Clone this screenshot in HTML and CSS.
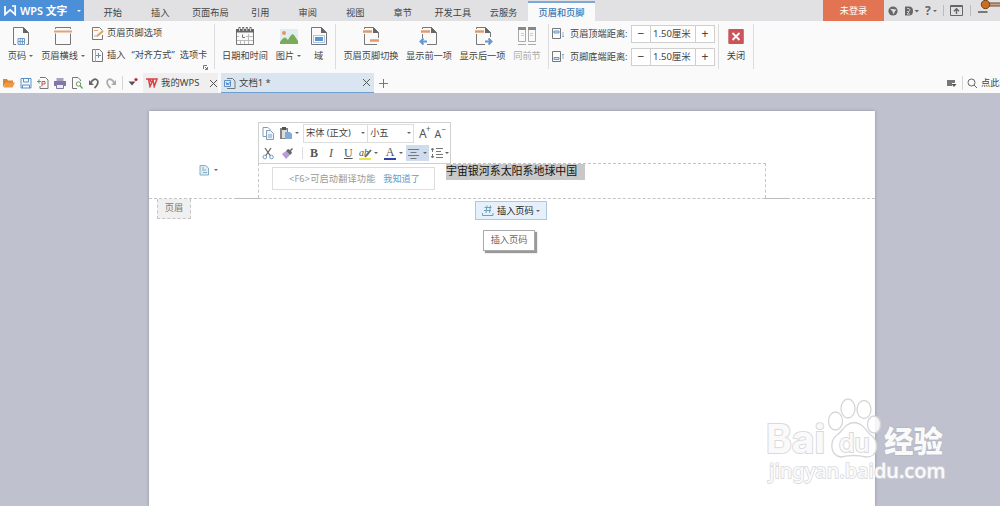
FILE: index.html
```html
<!DOCTYPE html>
<html>
<head>
<meta charset="utf-8">
<title>WPS 文字</title>
<link rel="stylesheet" href="styles.css">
</head>
<body>
<header class="titlebar">
  <div class="brand">
    <svg width="13" height="11" viewBox="0 0 13 11" fill="none" stroke="#fff" stroke-width="1.7"><path d="M1 1v8.500L6.200 4.800l5 4.700V1H8"/></svg>
    <span class="brand-name">WPS 文字</span><i class="caret light"></i>
  </div>
  <nav class="tabs">
    <span>开始</span><span>插入</span><span>页面布局</span><span>引用</span><span>审阅</span><span>视图</span><span>章节</span><span>开发工具</span><span>云服务</span><span class="active">页眉和页脚</span>
  </nav>
  <div class="login">未登录</div>
  <div class="system">
    <svg width="10" height="10" viewBox="0 0 10 10"><circle cx="5" cy="5" r="4.600" fill="#666"/><path d="M2 2.800l6.200.6-3 5-.6-3z" fill="#e1e1e3"/></svg>
    <svg class="skin" width="14" height="10" viewBox="0 0 14 10"><path d="M0 .5h4q4 0 4 4.500t-4 4.500H0z" fill="#666"/><path d="M2 2.500h2l1 1.500-1 1.500H2M4 6l-2 2h3" stroke="#e1e1e3" stroke-width=".8" fill="none"/><path d="M9.500 4H14l-2.200 2.500z" fill="#666"/></svg>
    <span class="help">?</span><i class="caret"></i>
    <i class="bar"></i>
    <svg class="collapse" width="13" height="11" viewBox="0 0 13 11" fill="none" stroke="#666"><path d="M.5.5h12v10H.5zM.5 1.500h12" /><path d="M6.500 9V4M4 6.300l2.500-2.500 2.500 2.500" stroke-width="1.400"/></svg>
    <i class="bar second"></i>
    <svg class="knob" width="22" height="21" viewBox="0 0 22 21"><path d="M0 12h9.500" stroke="#555" stroke-width="1.500"/><path d="M8 4.500h14" stroke="#674b35" stroke-width="4"/><path d="M8 4.500h14" stroke="#d2a47a" stroke-width="2"/><circle cx="7.500" cy="4.500" r="4.200" fill="#c8701d" stroke="#754018"/></svg>
  </div>
</header>

<section class="ribbon">
  <div class="tool number">
    <svg width="20" height="20" viewBox="0 0 20 20" fill="none" stroke="#777"><path d="M5 18.500H2.500v-17h10l5 5v12h-2"/><path d="M12 1l6 6h-6z" fill="#666" stroke="none"/><path d="M7 12.500h6.500v6H7zM7 15.500h6.500M9.200 12.500v6M11.400 12.500v6" stroke="#6b9bcc"/></svg>
    <span>页码<i class="caret"></i></span>
  </div>
  <div class="tool rule">
    <svg width="20" height="20" viewBox="0 0 20 20" fill="none"><path d="M2.500 3V1.500h15V3M2.500 7.500v11h15v-11" stroke="#777"/><path d="M1 5.500h18" stroke="#e4a374" stroke-width="2"/></svg>
    <span>页眉横线<i class="caret"></i></span>
  </div>
  <div class="stack options">
    <div><svg width="12" height="13" viewBox="0 0 12 13" fill="none"><path d="M10.500 8v4.500H.5V.5h7l3 3" stroke="#777"/><path d="M2 3.500h4M2 9h4" stroke="#e4a374"/><path d="M5 9l6-5" stroke="#dda15f" stroke-width="2"/></svg>页眉页脚选项</div>
    <div><svg width="12" height="13" viewBox="0 0 12 13" fill="none"><path d="M3.500.5h-3v12h3M3.500.5h4l3 3v9h-7" stroke="#777"/><path d="M3.500 1v11" stroke="#aaa"/><path d="M4 6.500h5M6.500 4v5" stroke="#668fbd"/></svg>插入<span class="quote">“对齐方式”</span>选项卡</div>
    <svg class="launcher" width="5" height="5" viewBox="0 0 5 5" fill="none" stroke="#777"><path d="M.5 4V.5H4M2 2l2 2M4.500 2v2.500H2"/></svg>
  </div>
  <i class="divider"></i>
  <div class="tool date">
    <svg width="20" height="20" viewBox="0 0 20 20" fill="none"><path d="M5.500 8v10M9.500 8v10M13.500 8v10M2 10.500h16M2 14.500h16" stroke="#bbb"/><path d="M4 8h7v6H4z" fill="#fafafa"/><path d="M1.500 3.500h17v15h-17z" stroke="#777"/><path d="M1 3h18v3.500H1z" fill="#666"/><path d="M4.500 1v4M8.200 1v4M11.800 1v4M15.500 1v4" stroke="#666" stroke-width="2"/><path d="M4.500 2v3M8.200 2v3M11.800 2v3M15.500 2v3" stroke="#eee" stroke-width=".8"/><path d="M7.500 8.500v3H10" stroke="#777"/></svg>
    <span>日期和时间</span>
  </div>
  <div class="tool picture">
    <svg width="20" height="20" viewBox="0 0 20 20"><path d="M1 3h18v15H1z" fill="#e1edf1"/><circle cx="5" cy="7" r="2" fill="#e79663"/><path d="M1 18v-2q4-6 6-4l2 2q4-8 6-5l4 6v3z" fill="#78ac59"/></svg>
    <span>图片<i class="caret"></i></span>
  </div>
  <div class="tool field">
    <svg width="20" height="20" viewBox="0 0 20 20" fill="none"><path d="M2.500 1.500h10l5 5v12h-15z" stroke="#777"/><path d="M12 1l6 6h-6z" fill="#666"/><path d="M6 11h8v4H6z" fill="#5d93d1"/><path d="M4.500 9.500h11v7h-11z" stroke="#5d93d1" stroke-dasharray="1 1"/></svg>
    <span>域</span>
  </div>
  <i class="divider d2"></i>
  <div class="tool switch">
    <svg width="20" height="20" viewBox="0 0 20 20" fill="none"><path d="M3.500 8v10.500H16M3.500 3V1.500h9l5 5V12" stroke="#777"/><path d="M12 1l6 6h-6z" fill="#666"/><path d="M2 5.500h9M9 14.500h9" stroke="#e49b6b" stroke-width="2.500"/></svg>
    <span>页眉页脚切换</span>
  </div>
  <div class="tool prev">
    <svg width="20" height="20" viewBox="0 0 20 20" fill="none"><path d="M3.500 8v4M3.500 3V1.500h9l5 5v12H8" stroke="#777"/><path d="M12 1l6 6h-6z" fill="#666"/><path d="M2 5.500h9" stroke="#e49b6b" stroke-width="2.500"/><path d="M8 15.500H2M4.500 12.500l-3 3 3 3" stroke="#6596d0" stroke-width="2"/></svg>
    <span>显示前一项</span>
  </div>
  <div class="tool next">
    <svg width="20" height="20" viewBox="0 0 20 20" fill="none"><path d="M3.500 8v10.500H12M3.500 3V1.500h9l5 5V11" stroke="#777"/><path d="M12 1l6 6h-6z" fill="#666"/><path d="M2 5.500h9" stroke="#e49b6b" stroke-width="2.500"/><path d="M12 15.500h6M15.500 12.500l3 3-3 3" stroke="#6596d0" stroke-width="2"/></svg>
    <span>显示后一项</span>
  </div>
  <div class="tool same">
    <svg width="20" height="20" viewBox="0 0 20 20" fill="none" stroke="#aaa"><path d="M1.500 1.500h7v14h-7zM11.500 1.500h7v14h-7z"/><path d="M1 2.500h8M11 2.500h8" stroke="#888" stroke-width="3"/><path d="M1 18.500h8M11 18.500h8"/><path d="M4 7.500h3M4 9.500h3M13 7.500h3M13 9.500h3" stroke="#ccc"/></svg>
    <span>同前节</span>
  </div>
  <i class="divider"></i>
  <div class="stack distance">
    <div><svg width="12" height="12" viewBox="0 0 12 12" fill="none"><path d="M.5.5h8v10h-8z" stroke="#777"/><path d="M2 3h5v2H2z" fill="#cfe0f1" stroke="#6799c9"/><path d="M11 4v5M10 8l1 1 1-1" stroke="#6799c9" stroke-width=".7"/></svg><label>页眉顶端距离:</label><span class="spin"><b>−</b><em>1.50厘米</em><b>+</b></span></div>
    <div><svg width="12" height="12" viewBox="0 0 12 12" fill="none"><path d="M.5.5h8v10h-8z" stroke="#777"/><path d="M2 6.500h5v2H2z" fill="#cfe0f1" stroke="#6799c9"/><path d="M11 3v5M10 4l1-1 1 1" stroke="#6799c9" stroke-width=".7"/></svg><label>页脚底端距离:</label><span class="spin"><b>−</b><em>1.50厘米</em><b>+</b></span></div>
  </div>
  <i class="divider d3"></i>
  <div class="tool close">
    <svg width="20" height="20" viewBox="0 0 20 20"><rect x="2.300" y="3" width="15.500" height="15" rx="1" fill="#cc5357"/><path d="M6.500 7l7 7m0-7l-7 7" stroke="#fff" stroke-width="1.800"/></svg>
    <span>关闭</span>
  </div>
  <i class="divider"></i>
</section>

<section class="quickbar">
  <div class="quick">
    <svg width="12" height="12" viewBox="0 0 12 12"><path d="M0 10V2h4l1 1.500h5V6H3z" fill="#d98534"/><path d="M3 5.500h9L9.500 10.500H.5z" fill="#ec9a45"/></svg>
    <svg width="12" height="12" viewBox="0 0 12 12" fill="none" stroke="#5c8fc5"><path d="M1 1.500h10v9.500H1zM3.500 1.500v3.500h5V1.500M2.500 11V8h7v3"/></svg>
    <svg width="12" height="12" viewBox="0 0 12 12" fill="none"><path d="M3 .5h5.500L11 3v8.500H3V9" stroke="#777"/><path d="M0 4.500h4M2 2.500v4" stroke="#5b9a59"/><path d="M5 9.500V4.500h3v2.500H5" stroke="#c65555"/></svg>
    <svg width="12" height="12" viewBox="0 0 12 12"><path d="M2.500 1h7v3h-7z" fill="#aaa0c2"/><path d="M0 4h12v5H0z" fill="#8178a9"/><path d="M2.500 7.500h7v4h-7z" fill="#eee" stroke="#8178a9"/></svg>
    <svg width="12" height="12" viewBox="0 0 12 12" fill="none"><path d="M9.500 4V3L7 .5H1.500v11H6" stroke="#777"/><circle cx="7.500" cy="7" r="2.200" stroke="#66a066"/><path d="M9 8.500l2.500 3" stroke="#66a066" stroke-width="1.300"/></svg>
    <svg width="12" height="12" viewBox="0 0 12 12" fill="none" stroke="#666" stroke-width="1.700"><path d="M2.500 6q4-6 7-2.500Q11 7 6.500 11"/><path d="M1 3v5h5z" fill="#666" stroke="none"/></svg>
    <svg width="12" height="12" viewBox="0 0 12 12" fill="none" stroke="#aaa" stroke-width="1.700"><path d="M9.500 6q-4-6-7-2.500Q1 7 5.500 11"/><path d="M11 3v5H6z" fill="#aaa" stroke="none"/></svg>
  </div>
  <i class="qdiv"></i>
  <svg class="more" width="12" height="12" viewBox="0 0 12 12"><path d="M1.500 4.500h7l-3.500 4z" fill="#555"/><circle cx="9" cy="2.500" r="1.600" fill="#c5222b"/></svg>
  <div class="file home"><svg width="12" height="10" viewBox="0 0 12 10" fill="none" stroke="#d84449" stroke-width="1.500"><path d="M0 1h2.500L4 8.500 7 2l1.200 6.500L11 1H4l1 3"/></svg><span>我的WPS</span><i class="x"></i></div>
  <div class="file doc"><svg width="12" height="12" viewBox="0 0 12 12" fill="none"><path d="M3 1.500h5.500L11 4v7.500H3" stroke="#777"/><path d="M.5 3.500h6v6h-6z" fill="#dbe9f8" stroke="#5d91c7"/><path d="M2 5l1 3 .7-2 .8 2 1-3" stroke="#4780b8" stroke-width=".8"/></svg><span>文档1 *</span><i class="x"></i></div>
  <i class="plus"></i>
  <div class="find">
    <svg width="10" height="9" viewBox="0 0 10 9"><path d="M0 1h8v3H5v3H0z" fill="#777"/><path d="M4.500 5h5L7 8z" fill="#555"/></svg>
    <i class="qdiv"></i>
    <svg width="11" height="11" viewBox="0 0 11 11" fill="none" stroke="#666"><circle cx="4.500" cy="4.500" r="3.500"/><path d="M7 7l3 3"/></svg>
    <span>点此查</span>
  </div>
</section>

<main class="workspace">
  <article class="page">
    <div class="header-zone">
      <div class="header-frame"><span class="selected">宇宙银河系太阳系地球中国</span></div>
    </div>
    <div class="header-tag">页眉</div>
    <div class="tick left"></div><div class="tick right"></div>
    <div class="paste-mark"><svg width="11" height="12" viewBox="0 0 11 12" fill="none" stroke="#84adc6"><path d="M1 1.500h5.500L9.500 4v7H1z" fill="#e1edf4"/><path d="M3 4h2M3 6h4M4 8.500h4"/></svg><i class="caret"></i></div>
    <div class="hint"><span>&lt;F6&gt;可启动翻译功能</span><a>我知道了</a></div>
    <div class="mini">
      <div class="mini-row">
        <svg width="13" height="13" viewBox="0 0 13 13" fill="none" stroke="#829db9"><path d="M1 .5h5l2 2v7H1z"/><path d="M4.500 3.500h4l3 3v6h-7z" fill="#edf3fa"/><path d="M6 8h4M6 10h4"/></svg>
        <svg class="paste" width="13" height="13" viewBox="0 0 13 13"><path d="M0 1h8v11H0z" fill="#848487"/><path d="M2 0h4v3H2z" fill="#555"/><path d="M2 3h5v8H2z" fill="#ddd"/><path d="M5 5h5l2 2v5H5z" fill="#84aad9"/></svg><i class="caret"></i>
        <div class="select font"><span>宋体 (正文)</span><i class="caret"></i></div><div class="select size"><span>小五</span><i class="caret"></i></div>
        <span class="grow">A<sup>+</sup></span><span class="grow shrink">A<sup>−</sup></span>
      </div>
      <div class="mini-row">
        <svg width="13" height="13" viewBox="0 0 13 13" fill="none"><path d="M3 1l5.500 8M9 1L3.500 9" stroke="#666" stroke-width="1.300"/><circle cx="2.800" cy="10" r="1.800" stroke="#769bc6"/><circle cx="9.500" cy="10" r="1.800" stroke="#769bc6"/></svg>
        <svg class="brush" width="13" height="13" viewBox="0 0 13 13"><path d="M1 7l4-3 4 4-4 4z" fill="#ba9bd8"/><path d="M5 4l2-2 2 1 2-2 1 1-2 2 1 2-2 2z" fill="#666"/></svg>
        <i class="mini-div"></i>
        <span class="glyph bold">B</span><span class="glyph italic">I</span><span class="glyph under">U</span>
        <span class="glyph mark">ab<svg width="8" height="9" viewBox="0 0 8 9"><path d="M1 8l6-7" stroke="#666" stroke-width="1.800"/></svg></span><i class="caret"></i>
        <span class="glyph color">A</span><i class="caret"></i>
        <span class="align"><svg width="12" height="12" viewBox="0 0 12 12" stroke="#777"><path d="M0 2.500h11M2.500 5.500h6M0 8.500h11M2.500 11.500h6"/></svg><i class="caret"></i></span>
        <svg class="spacing" width="12" height="12" viewBox="0 0 12 12" fill="none" stroke="#777"><path d="M5 1.500h7M5 4.500h5M5 7.500h7M5 10.500h7M1.500 1v4M0 3l1.500-2L3 3M1.500 7v4M0 9l1.500 2L3 9"/></svg><i class="caret"></i>
      </div>
    </div>
    <div class="insert"><svg width="12" height="12" viewBox="0 0 12 12" fill="none" stroke="#6da0bf"><path d="M2.500 2.500h7M2 5.500h7M5 .5L4 8M8.500.5L7.500 8M.5 8v2.500h10.500V8"/></svg><span>插入页码</span><i class="caret"></i></div>
    <div class="tooltip">插入页码</div>
  </article>
  <div class="watermark">
    <span class="bai">Bai</span>
    <svg width="54" height="62" viewBox="0 0 54 62" fill="#fff" fill-opacity=".85" stroke="#d6d6d9" stroke-width="1.300"><ellipse cx="7.500" cy="24" rx="7" ry="9"/><ellipse cx="20" cy="11.500" rx="7" ry="9.500"/><ellipse cx="36" cy="12.500" rx="7" ry="9"/><ellipse cx="46" cy="27.500" rx="6.500" ry="8.500"/><path d="M26 25.500C17 26 15 34 9 38C2 43 1 58 13 60Q26 57 38 60C51 60 51 45 44 39C37 34 36 26 26 25.500z"/></svg>
    <span class="du">du</span>
    <span class="jy">经验</span>
    <span class="url">jingyan.baidu.com</span>
  </div>
</main>
</body>
</html>
```
FILE: styles.css
```css
* { box-sizing: border-box; }
body {
  margin: 0; width: 1000px; height: 506px; overflow: hidden;
  display: flex; flex-direction: column;
  font: 9.2px/14px "Noto Sans", "Noto Sans CJK SC", sans-serif;
  color: #444; background: #fafafa; white-space: nowrap;
}
i, em { font-style: normal; }
svg { display: block; flex: none; }
.caret { flex: none; display: inline-block; border: 2.5px solid transparent; border-top-color: #666; border-bottom: 0; }
.caret.light { border-top-color: #fff; }

/* Title bar */
.titlebar { height: 21px; flex: none; display: flex; background: #e1e1e3; }
.brand { width: 84px; height: 21px; display: flex; align-items: center; padding-left: 4px; background: #4b8fd9; color: #fff; }
.brand-name { width: 56px; padding-left: 3px; font-size: 10.8px; font-weight: 600; }
.brand .caret { margin-left: 4px; }
.tabs { display: flex; width: 739px; padding-left: 5px; }
.tabs span { width: 47.5px; text-align: center; padding-top: 6px; height: 21px; }
.tabs span:nth-child(3), .tabs span:nth-child(8) { width: 52.5px; }
.tabs span:nth-child(9) { width: 49px; }
.tabs .active { width: 67px; padding-top: 3px; margin-top: 1px; height: 20px; border-top: 2px solid #7ba8d6; background: #fafafa; color: #3b78b4; font-weight: 500; }
.login { width: 61px; padding-top: 4px; background: #e27454; color: #fff; text-align: center; }
.system { display: flex; align-items: center; height: 21px; padding-left: 4px; width: 116px; }
.skin { margin-left: 7px; }
.help { font-size: 12px; font-weight: 700; color: #666; width: 8px; margin: 0 2px 0 6px; }
.bar { width: 1px; height: 11px; background: #bbb; margin: 0 6px 0 6px; }
.bar.second { margin: 0 7px; }

/* Ribbon */
.ribbon { height: 52px; flex: none; display: flex; padding-left: 4px; }
.tool { display: flex; flex-direction: column; align-items: center; padding-top: 5px; }
.tool span { margin-top: 3px; display: flex; align-items: center; gap: 3px; }
.number { width: 33px; } .rule { width: 52px; }
.date { width: 52px; margin-left: 4px; } .picture { width: 35px; } .field { width: 25px; }
.switch { width: 60px; } .prev { width: 56px; } .next { width: 51px; } .same { width: 38px; color: #aaa; }
.close { width: 34px; }
.divider { width: 1px; height: 45px; margin-top: 3px; background: #dcdcde; flex: none; }
.d2 { margin: 3px 5px 0 4px; }
.same + .divider { margin-left: 2px; }
.stack { display: flex; flex-direction: column; }
.stack div { display: flex; align-items: center; height: 22px; }
.options { width: 125px; padding: 1px 0 0 3px; }
.options svg { margin-right: 3px; }
.options .quote { margin: 0 5px 0 6px; }
.options .launcher { align-self: flex-end; margin: -1px 6px 0 0; }
.distance { width: 166px; padding: 1px 0 0 3px; }
.distance div { height: 23px; }
.distance label { width: 61px; margin-left: 6px; }
.spin { display: flex; width: 84px; height: 18px; border: 1px solid #cfcfcf; background: #fff; line-height: 16px; }
.spin b { width: 18px; text-align: center; font-size: 12px; font-weight: 400; color: #444; }
.spin em { flex: 1; font-size: 9.5px; padding-left: 2px; border: solid #cfcfcf; border-width: 0 1px; }
.d3 { margin-left: 3px; }

/* Quick access and file tabs */
.quickbar { height: 20px; flex: none; display: flex; align-items: center; }
.quick { display: flex; gap: 5px; padding-left: 3px; width: 122px; }
.qdiv { width: 1px; height: 14px; background: #d5d5d7; }
.more { margin: 0 4px 0 4px; }
.file { display: flex; align-items: center; height: 20px; background: #efeff0; padding: 0 4px 0 3px; gap: 3px; }
.home { width: 75px; margin-right: 3px; padding-right: 1px; font-size: 9.4px; }
.doc { width: 153px; background: #dae5f2; border-bottom: 1.5px solid #6f9fd0; font-size: 9.4px; }
.x { margin-left: auto; width: 7px; height: 7px; background: linear-gradient(45deg, transparent 43%, #555 45% 55%, transparent 57%), linear-gradient(-45deg, transparent 43%, #555 45% 55%, transparent 57%); }
.plus { width: 9px; height: 9px; margin-left: 5px; background: linear-gradient(#777, #777) 4px 0/1px 9px no-repeat, linear-gradient(#777, #777) 0 4px/9px 1px no-repeat; }
.find { display: flex; align-items: center; margin-left: auto; width: 53px; overflow: hidden; flex: none; }
.find .qdiv { flex: none; margin: 0 4px 0 5px; }
.find span { margin-left: 3px; }

/* Document */
.workspace { position: relative; flex: 1; background: #bfc2ce; padding: 18px 0 0 149px; }
.page { position: relative; width: 726px; height: 395px; background: #fff; box-shadow: 0 0 3px #8e919d; }
.header-zone { height: 88px; padding: 52px 109px 0 109px; border-bottom: 1px dashed #c4c4c4; }
.header-frame { height: 35px; border: 1px dashed #c4c4c4; border-bottom: 0; padding-left: 187px; }
.selected { display: block; width: 139px; height: 16px; background: #c8c8c8; color: #111; font-size: 10.95px; line-height: 14px; }
.header-tag { width: 34px; height: 20px; margin-left: 8px; border: 1px dashed #c4c4c4; border-top: 0; background: #f0f0f0; text-align: center; line-height: 18px; color: #777; }
.tick { position: absolute; top: 87px; width: 23px; height: 1px; background: #bbb; }
.tick.left { left: 87px; } .tick.right { left: 616px; }
.paste-mark { position: absolute; left: 50px; top: 53px; display: flex; align-items: center; gap: 4px; }
.hint { position: absolute; left: 123px; top: 56px; width: 163px; height: 23px; padding: 0 14px 0 16px; border: 1px solid #ddd; background: #fff; display: flex; align-items: center; justify-content: space-between; color: #999; }
.hint span { letter-spacing: .15px; }
.hint a { color: #659ac9; }
.mini { position: absolute; left: 109px; top: 11px; width: 193px; height: 42px; border: 1px solid #d0d0d0; background: #fff; }
.mini-row { display: flex; align-items: center; height: 20px; padding-left: 3px; }
.mini .caret { border-width: 2px; border-bottom: 0; }
.paste { margin: 0 2px 0 5px; }
.select { display: flex; align-items: center; height: 19px; border: 1px solid #ddd; padding: 0 2px; }
.select .caret { margin-left: auto; }
.font { width: 67px; margin-left: 4px; } .size { width: 47px; border-left: 0; }
.grow { position: relative; font-size: 12px; width: 16px; margin: 1px 0 0 5px; color: #555; }
.grow.shrink { margin-left: 0; font-size: 10.5px; }
.grow sup { position: absolute; left: 7px; top: -4px; font-size: 8px; line-height: 11px; }
.brush { margin-left: 6px; }
.mini-div { width: 1px; height: 12px; background: #ddd; margin: 0 7px 0 8px; }
.glyph { width: 17px; font: 12px/14px "Liberation Serif", serif; color: #555; }
.bold { font-weight: bold; } .italic { font-style: italic; padding-left: 2px; } .under { text-decoration: underline; width: 15px; }
.mark { position: relative; width: 12px; height: 13px; font-size: 10px; line-height: 11px; font-style: italic; border-bottom: 2px solid #e9e84b; margin-right: 3px; }
.mark svg { position: absolute; left: 5px; top: 2px; }
.color { width: 12px; height: 13px; text-align: center; line-height: 11px; border-bottom: 2px solid #3443a8; margin: 0 3px 0 6px; }
.align { display: flex; align-items: center; gap: 3px; width: 23px; height: 16px; margin-left: 3px; padding-left: 2px; background: #cfdcee; }
.spacing { margin: 0 2px; }
.insert { position: absolute; left: 326px; top: 90px; width: 72px; height: 19px; display: flex; align-items: center; gap: 3px; padding-left: 6px; border: 1px solid #adc7de; background: #e5f0fb; color: #222; }
.insert .caret { margin-left: -1px; border-width: 2px; border-bottom: 0; }
.tooltip { position: absolute; left: 334px; top: 119px; width: 52px; height: 21px; border: 1px solid #aaa; background: #fff; box-shadow: 2px 2px 1px #999; line-height: 18px; text-align: center; color: #666; }

/* Watermark */
.watermark { position: absolute; left: 767px; top: 304px; width: 180px; height: 92px; color: #fafafb; }
.watermark > * { position: absolute; }
.watermark span { -webkit-text-stroke: 2px #dadadd; paint-order: stroke fill; }
.bai { left: -1px; top: 22px; font: 700 39px/40px Inter, sans-serif; }
.watermark svg { left: 61px; top: 0; overflow: visible; }
.watermark .du { left: 72px; top: 31px; font: 500 25px/30px Inter, sans-serif; }
.watermark .jy { left: 117px; top: 23px; font: 900 29.5px/38px "Noto Sans CJK SC", sans-serif; -webkit-text-stroke: 1.5px #b4b7c2; }
.watermark .url { left: 2px; top: 61px; font: 500 20px/26px "Noto Sans", sans-serif; -webkit-text-stroke: 1.5px #d8d8dc; }
```
